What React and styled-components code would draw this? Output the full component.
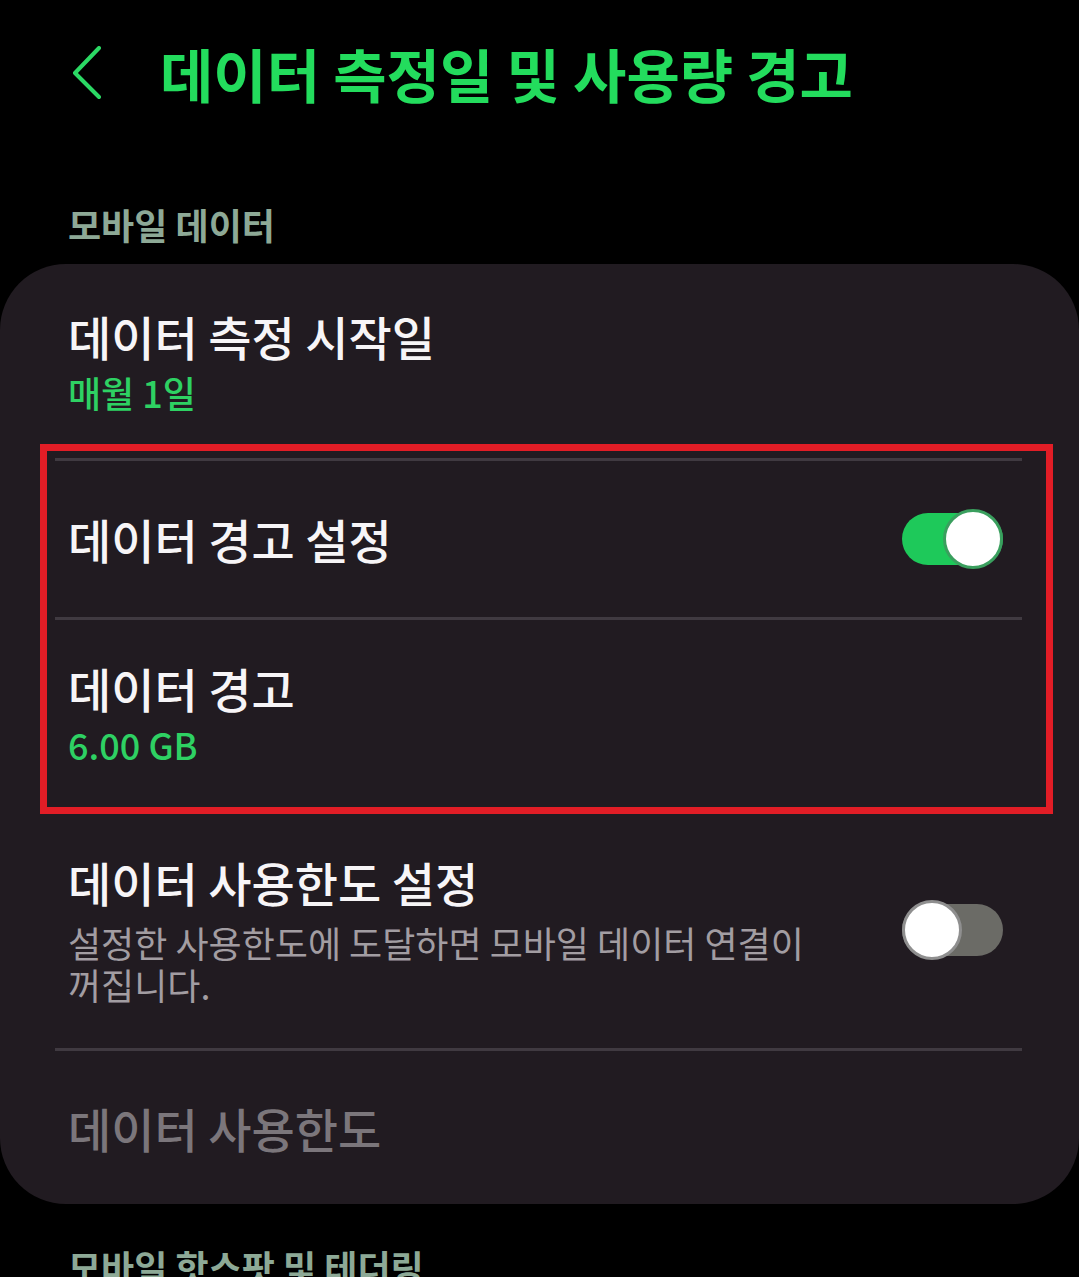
import React from "react";
import styled, { createGlobalStyle } from "styled-components";

const GlobalStyle = createGlobalStyle`
  html, body {
    margin: 0;
    padding: 0;
    background: #000;
  }
  body {
    font-family: "Noto Sans CJK KR", "Noto Sans", sans-serif;
    overflow: hidden;
  }
`;

const Page = styled.div`
  width: 1079px;
  height: 1277px;
  background: #000;
  overflow: hidden;
`;

const Header = styled.header`
  height: 146px;
  display: flex;
  align-items: center;
  padding-left: 72px;
  gap: 58px;
`;

const BackButton = styled.button`
  display: flex;
  padding: 0;
  border: 0;
  background: none;
  cursor: pointer;
  svg {
    display: block;
  }
`;

const Title = styled.h1`
  margin: 0;
  font-size: 58px;
  font-weight: 700;
  line-height: 64px;
  color: #23dc5d;
`;

const SectionLabel = styled.div`
  margin: ${(p) => p.$top}px 0 0 68px;
  font-size: 36px;
  font-weight: 700;
  line-height: 44px;
  color: #8da996;
`;

const Card = styled.section`
  position: relative;
  margin-top: 18px;
  background: #211b21;
  border-radius: 66px;
`;

const Row = styled.div`
  display: flex;
  align-items: center;
  justify-content: space-between;
  gap: 40px;
  min-height: ${(p) => p.$height || 0}px;
  padding: ${(p) => p.$pt || 0}px 76px ${(p) => p.$pb || 0}px 68px;
  box-sizing: border-box;
`;

const TextBlock = styled.div`
  display: flex;
  flex-direction: column;
  min-width: 0;
`;

const RowTitle = styled.div`
  font-size: 47px;
  font-weight: 500;
  line-height: 56px;
  color: ${(p) => (p.$disabled ? "#7b767b" : "#f7f5f7")};
`;

const RowValue = styled.div`
  margin-top: 6px;
  font-size: 36px;
  font-weight: 500;
  line-height: 44px;
  color: #2ed163;
`;

const RowDesc = styled.div`
  margin-top: 11px;
  font-size: 36px;
  font-weight: 400;
  line-height: 42px;
  color: #a29da2;
  word-break: keep-all;
`;

const Divider = styled.div`
  height: 3px;
  margin: 0 57px 0 55px;
  background: #403a41;
`;

const Switch = styled.div`
  position: relative;
  flex: none;
  width: 101px;
  height: 60px;
`;

const Track = styled.div`
  position: absolute;
  left: 0;
  right: 0;
  top: 4px;
  height: 52px;
  border-radius: 26px;
  background: ${(p) => (p.$on ? "#1ec95a" : "#6b6b66")};
`;

const Thumb = styled.div`
  position: absolute;
  top: 0;
  ${(p) => (p.$on ? "right: 0;" : "left: 0;")}
  width: 60px;
  height: 60px;
  box-sizing: border-box;
  border-radius: 50%;
  background: #fff;
  border: 3px solid ${(p) => (p.$on ? "#3a9f5e" : "#8f8f8f")};
`;

const Highlight = styled.div`
  position: absolute;
  left: 40px;
  top: 180px;
  width: 1013px;
  height: 370px;
  box-sizing: border-box;
  border: 7px solid #e21d26;
  pointer-events: none;
`;

const Toggle = ({ on }) => (
  <Switch>
    <Track $on={on} />
    <Thumb $on={on} />
  </Switch>
);

export default function App() {
  return (
    <Page>
      <GlobalStyle />
      <Header>
        <BackButton aria-label="뒤로">
          <svg width="30" height="54" viewBox="0 0 30 54" fill="none">
            <path
              d="M27 2 L3 27 L27 51"
              stroke="#2bd964"
              strokeWidth="4"
              strokeLinecap="round"
              strokeLinejoin="round"
            />
          </svg>
        </BackButton>
        <Title>데이터 측정일 및 사용량 경고</Title>
      </Header>

      <SectionLabel $top={56}>모바일 데이터</SectionLabel>

      <Card>
        <Row $pt={44} $pb={44}>
          <TextBlock>
            <RowTitle>데이터 측정 시작일</RowTitle>
            <RowValue>매월 1일</RowValue>
          </TextBlock>
        </Row>
        <Divider />
        <Row $height={156}>
          <RowTitle>데이터 경고 설정</RowTitle>
          <Toggle on />
        </Row>
        <Divider />
        <Row $pt={40} $pb={48}>
          <TextBlock>
            <RowTitle>데이터 경고</RowTitle>
            <RowValue>6.00 GB</RowValue>
          </TextBlock>
        </Row>
        <Row $pt={40} $pb={43}>
          <TextBlock>
            <RowTitle>데이터 사용한도 설정</RowTitle>
            <RowDesc>
              설정한 사용한도에 도달하면 모바일 데이터 연결이 꺼집니다.
            </RowDesc>
          </TextBlock>
          <Toggle on={false} />
        </Row>
        <Divider />
        <Row $height={153}>
          <RowTitle $disabled>데이터 사용한도</RowTitle>
        </Row>
        <Highlight />
      </Card>

      <SectionLabel $top={40}>모바일 핫스팟 및 테더링</SectionLabel>
    </Page>
  );
}
